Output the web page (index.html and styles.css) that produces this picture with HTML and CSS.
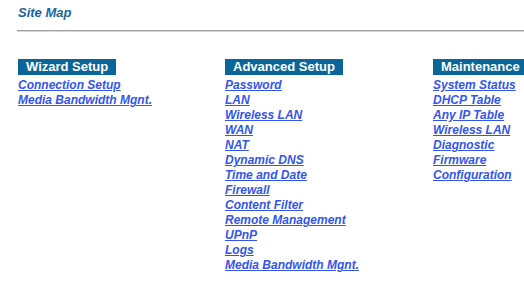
FILE: index.html
```html
<!DOCTYPE html>
<html lang="en">

<head>
    <meta charset="UTF-8">
    <title>Site Map</title>
    <link rel="stylesheet" href="styles.css">
</head>

<body>
    <div class="page">
        <h1 class="title">Site Map</h1>
        <div class="rule"></div>

        <div class="sitemap">
            <div class="group">
                <div class="group-head">Wizard Setup</div>
                <a href="#">Connection Setup</a>
                <a href="#">Media Bandwidth Mgnt.</a>
            </div>
            <div class="group">
                <div class="group-head">Advanced Setup</div>
                <a href="#">Password</a>
                <a href="#">LAN</a>
                <a href="#">Wireless LAN</a>
                <a href="#">WAN</a>
                <a href="#">NAT</a>
                <a href="#">Dynamic DNS</a>
                <a href="#">Time and Date</a>
                <a href="#">Firewall</a>
                <a href="#">Content Filter</a>
                <a href="#">Remote Management</a>
                <a href="#">UPnP</a>
                <a href="#">Logs</a>
                <a href="#">Media Bandwidth Mgnt.</a>
            </div>
            <div class="group">
                <div class="group-head">Maintenance</div>
                <a href="#">System Status</a>
                <a href="#">DHCP Table</a>
                <a href="#">Any IP Table</a>
                <a href="#">Wireless LAN</a>
                <a href="#">Diagnostic</a>
                <a href="#">Firmware</a>
                <a href="#">Configuration</a>
            </div>
        </div>
    </div>
</body>

</html>
```

FILE: styles.css
```css
body {
    margin: 0;
    background: white;
    font-family: "Liberation Sans", Arial, sans-serif;
    overflow: hidden;
}

.page {
    padding: 5px 0 0 17px;
    overflow: hidden;
}

.title {
    margin: 0 0 0 1px;
    font-size: 13px;
    line-height: 16px;
    font-style: italic;
    font-weight: bold;
    color: #1a66a0;
}

.rule {
    margin-top: 9px;
    height: 1px;
    background-color: #a0a0a4;
    border-bottom: 1px solid #d8d8da;
}

.sitemap {
    display: grid;
    grid-template-columns: 207px 208px 207px;
    margin-top: 27px;
    margin-left: 1px;
    width: 622px;
}

.group {
    display: flex;
    flex-direction: column;
    align-items: flex-start;
    min-width: 0;
}

.group-head {
    background-color: #0a6598;
    color: white;
    font-size: 13px;
    font-weight: bold;
    line-height: 16px;
    padding: 0 8px;
    margin-bottom: 3px;
    white-space: nowrap;
}

.group a {
    font-size: 12px;
    line-height: 15px;
    font-weight: bold;
    font-style: italic;
    color: #3355ee;
    text-decoration: underline;
    white-space: nowrap;
}
```
